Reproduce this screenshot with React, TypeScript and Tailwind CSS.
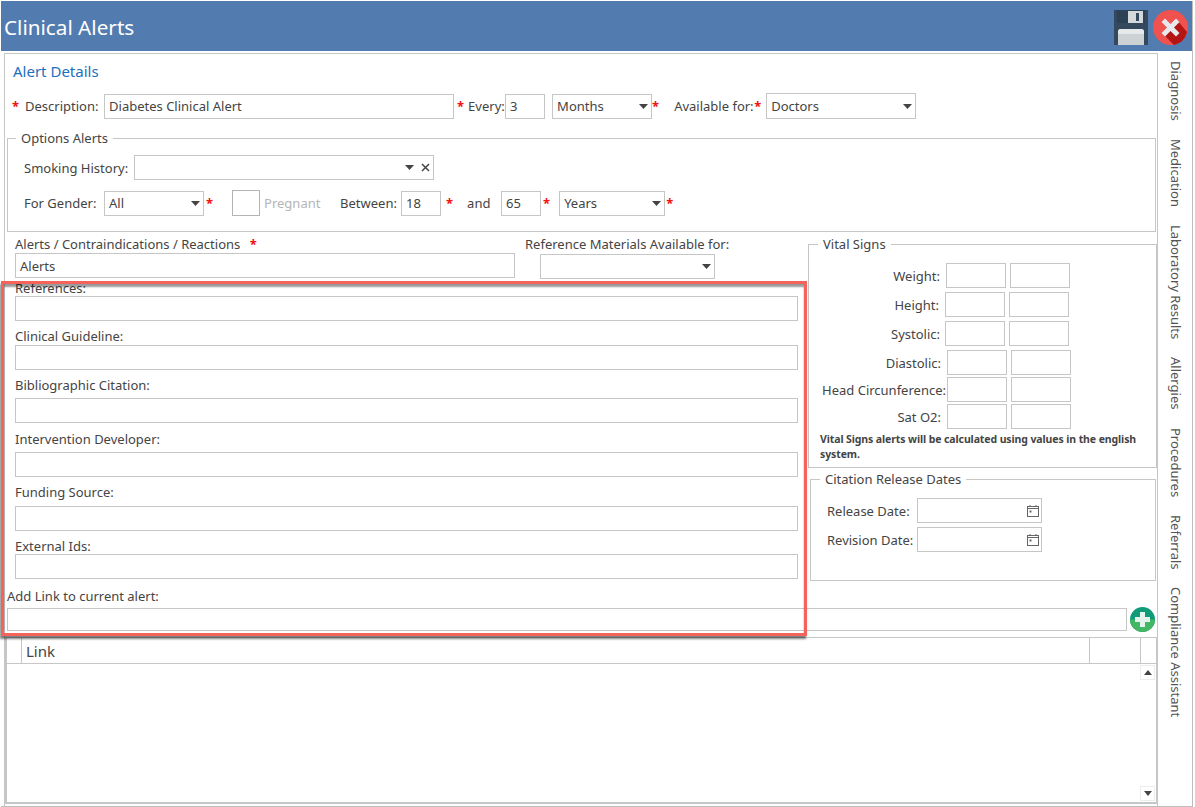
import type { ReactNode } from "react";

const tabs = ["Diagnosis", "Medication", "Laboratory Results", "Allergies", "Procedures", "Referrals", "Compliance Assistant"];

const vitals = [
  { label: "Weight:", labelW: "w-[119px]", gap: "ml-[6px]", top: "mt-0" },
  { label: "Height:", labelW: "w-[118px]", gap: "ml-[6px]", top: "mt-[4px]" },
  { label: "Systolic:", labelW: "w-[119px]", gap: "ml-[5px]", top: "mt-[4px]" },
  { label: "Diastolic:", labelW: "w-[120px]", gap: "ml-[6px]", top: "mt-[4px]" },
  { label: "Head Circunference:", labelW: "w-[125px]", gap: "ml-[1px]", top: "mt-[2px]" },
  { label: "Sat O2:", labelW: "w-[120px]", gap: "ml-[6px]", top: "mt-[2px]" },
];

const fields = [
  { label: "References:", top: "mt-0", input: "mt-[-1px]" },
  { label: "Clinical Guideline:", top: "mt-[6px]", input: "mt-0" },
  { label: "Bibliographic Citation:", top: "mt-[6px]", input: "mt-[4px]" },
  { label: "Intervention Developer:", top: "mt-[7px]", input: "mt-[4px]" },
  { label: "Funding Source:", top: "mt-[6px]", input: "mt-[5px]" },
  { label: "External Ids:", top: "mt-[6px]", input: "mt-[-1px]" },
];

function Star({ className = "" }: { className?: string }) {
  return <span className={`text-[#f01010] font-bold leading-none ${className}`}>*</span>;
}

function Box({ className = "", children }: { className?: string; children?: ReactNode }) {
  return (
    <div className={`flex items-center border border-[#c6c6c6] bg-white px-[4px] shrink-0 ${className}`}>
      {children}
    </div>
  );
}

function Arrow() {
  return (
    <svg width="9" height="5" viewBox="0 0 9 5" className="shrink-0">
      <polygon points="0,0 9,0 4.5,5" fill="#444444" />
    </svg>
  );
}

function Select({ className = "", value = "" }: { className?: string; value?: string }) {
  return (
    <Box className={`justify-between !pr-[3px] ${className}`}>
      <span>{value}</span>
      <Arrow />
    </Box>
  );
}

function CalendarIcon() {
  return (
    <svg width="14" height="14" viewBox="0 0 14 14" fill="none" stroke="#666666" strokeWidth="1" className="shrink-0">
      <rect x="1.5" y="2.5" width="11" height="10" />
      <path d="M1.5 4.5h11M4 1v2M10 1v2" />
      <rect x="3.5" y="6.5" width="2" height="2" fill="#666666" stroke="none" />
    </svg>
  );
}

function SaveIcon() {
  return (
    <svg width="34" height="35" viewBox="0 0 34 35" className="shrink-0">
      <rect width="34" height="35" fill="#34495e" />
      <rect x="3" y="0" width="28" height="13" fill="#2d4156" />
      <rect x="14" y="1" width="15" height="12" fill="#d4d8da" />
      <rect x="22" y="3" width="3" height="8" fill="#34495e" />
      <path d="M4 35V22a3 3 0 0 1 3-3h20a3 3 0 0 1 3 3v13z" fill="#ccd1d4" />
      <path d="M4 24v-2a3 3 0 0 1 3-3h20a3 3 0 0 1 3 3v2z" fill="#e6e9ea" />
    </svg>
  );
}

function CloseIcon() {
  return (
    <svg width="35" height="35" viewBox="0 0 35 35" className="shrink-0">
      <circle cx="17.5" cy="17.5" r="17.5" fill="#f0524f" />
      <path d="M24 10l10 12a17.5 17.5 0 0 1-13 13L10 24z" fill="#b51414" />
      <path d="M12 8.500l5.500 5.500 5.500-5.500 3.500 3.500-5.500 5.500 5.500 5.500-3.500 3.500-5.500-5.500-5.500 5.500-3.500-3.500 5.500-5.500-5.500-5.500z" fill="#e6e9ee" />
    </svg>
  );
}

function AddIcon() {
  return (
    <svg width="25" height="25" viewBox="0 0 25 25" className="shrink-0">
      <circle cx="12.500" cy="12.500" r="12.500" fill="#0f9a78" />
      <path d="M0 12.500h25a12.500 12.500 0 0 1-25 0z" fill="#43b763" />
      <path d="M10 5h5v5h5v5h-5v5h-5v-5H5v-5h5z" fill="#e4f4ec" />
    </svg>
  );
}

export default function App() {
  return (
    <div className="relative w-[1195px] h-[807px] overflow-hidden bg-white text-[13px] leading-[18px] text-[#444444] font-['Noto_Sans','Open_Sans',sans-serif]">
      <div className="flex flex-col h-[806px] ml-[1px] mr-[2px] mt-[1px] border-r border-b border-[#bdbdbd]">
        {/* Title bar */}
        <header className="flex items-center h-[50px] bg-[#527bb0] pl-[3px] pr-[4px] shrink-0">
          <h1 className="text-[20.7px] leading-[28px] mt-[2px] text-white flex-1">Clinical Alerts</h1>
          <div className="flex items-center gap-[5px] mt-[2px]">
            <SaveIcon />
            <CloseIcon />
          </div>
        </header>

        <div className="flex flex-1 min-h-0 pt-[2px]">
          {/* Form panel */}
          <main className="w-[1154px] ml-[3px] border border-[#c6c6c6] border-b-0 flex flex-col">
            <h2 className="text-[15px] leading-[20px] text-[#1c6fbe] ml-[8px] mt-[7px]">Alert Details</h2>

            {/* Description row */}
            <div className="flex items-center h-[26px] mt-[12px] ml-[7px] whitespace-nowrap">
              <Star />
              <span className="ml-[6px] w-[79px]">Description:</span>
              <Box className="w-[350px] h-[25px]">Diabetes Clinical Alert</Box>
              <Star className="ml-[3px]" />
              <span className="ml-[4px] w-[37px]">Every:</span>
              <Box className="w-[40px] h-[25px]">3</Box>
              <Select className="w-[100px] h-[25px] ml-[7px]" value="Months" />
              <Star />
              <span className="ml-[15px] w-[80px]">Available for:</span>
              <Star />
              <Select className="w-[150px] h-[26px] ml-[5px]" value="Doctors" />
            </div>

            {/* Options Alerts */}
            <fieldset className="border border-[#c6c6c6] ml-[2px] mr-[1px] mt-[10px] h-[103px] pl-[16px]">
              <legend className="ml-[-8px] px-[5px] leading-[18px]">Options Alerts</legend>
              <div className="flex items-center h-[25px] mt-[8px]">
                <span className="w-[110px]">Smoking History:</span>
                <Box className="w-[300px] h-[25px] justify-end gap-[7px] !pr-[3px]">
                  <Arrow />
                  <svg width="9" height="9" viewBox="0 0 9 9" stroke="#444444" strokeWidth="1.500" className="shrink-0">
                    <path d="M1 1l7 7M8 1l-7 7" />
                  </svg>
                </Box>
              </div>
              <div className="flex items-center h-[26px] mt-[10px] whitespace-nowrap">
                <span className="w-[80px]">For Gender:</span>
                <Select className="w-[100px] h-[25px]" value="All" />
                <Star className="ml-[2px]" />
                <div className="w-[28px] h-[26px] ml-[19px] border border-[#b4b4b4] bg-white shrink-0" />
                <span className="ml-[4px] w-[76px] text-[#b5b5b5]">Pregnant</span>
                <span className="w-[61px]">Between:</span>
                <Box className="w-[40px] h-[25px]">18</Box>
                <Star className="ml-[5px]" />
                <span className="ml-[14px] w-[34px]">and</span>
                <Box className="w-[40px] h-[25px]">65</Box>
                <Star className="ml-[2px]" />
                <Select className="w-[106px] h-[25px] ml-[9px]" value="Years" />
                <Star className="ml-[1px]" />
              </div>
            </fieldset>

            {/* Lower area */}
            <div className="flex">
              <div className="w-[803px] shrink-0 pl-[10px]">
                <div className="flex">
                  <div className="w-[510px] pt-[3px]">
                    <div className="h-[18px]">
                      Alerts / Contraindications / Reactions <Star className="ml-[6px]" />
                    </div>
                    <Box className="w-[500px] h-[25px]">Alerts</Box>
                  </div>
                  <div className="pt-[3px]">
                    <div className="h-[18px]">Reference Materials Available for:</div>
                    <Select className="w-[175px] h-[25px] mt-[1px] ml-[15px]" />
                  </div>
                </div>
                {fields.map((f) => (
                  <div key={f.label}>
                    <div className={`h-[18px] ${f.top}`}>{f.label}</div>
                    <Box className={`w-[783px] h-[25px] ${f.input}`} />
                  </div>
                ))}
              </div>

              <div className="w-[350px] shrink-0">
                <fieldset className="border border-[#c6c6c6] border-r-2 h-[233px] mt-[3px] pl-[12px]">
                  <legend className="ml-[-3px] px-[5px] leading-[18px]">Vital Signs</legend>
                  <div className="pt-[10px]">
                    {vitals.map((v) => (
                      <div key={v.label} className={`flex items-center h-[25px] ${v.top}`}>
                        <span className={`text-right shrink-0 whitespace-nowrap ${v.labelW}`}>{v.label}</span>
                        <Box className={`w-[60px] h-[25px] ${v.gap}`} />
                        <Box className="w-[60px] h-[25px] ml-[4px]" />
                      </div>
                    ))}
                  </div>
                  <p className="text-[10.5px] leading-[15px] font-bold mt-[3px] ml-[-1px] tracking-[-0.1px] whitespace-nowrap">
                    Vital Signs alerts will be calculated using values in the english
                    <br />
                    system.
                  </p>
                </fieldset>
                <fieldset className="border border-[#c6c6c6] ml-[2px] mr-[2px] mt-[2px] h-[111px] pl-[16px]">
                  <legend className="ml-[-7px] px-[5px] leading-[18px]">Citation Release Dates</legend>
                  <div className="flex items-center h-[25px] mt-[10px]">
                    <span className="w-[90px]">Release Date:</span>
                    <Box className="w-[125px] h-[25px] justify-end !pr-[1px]">
                      <CalendarIcon />
                    </Box>
                  </div>
                  <div className="flex items-center h-[25px] mt-[4px]">
                    <span className="w-[90px]">Revision Date:</span>
                    <Box className="w-[125px] h-[25px] justify-end !pr-[1px]">
                      <CalendarIcon />
                    </Box>
                  </div>
                </fieldset>
              </div>
            </div>

            {/* Add link */}
            <div className="ml-[2px] mt-[6px] h-[18px]">Add Link to current alert:</div>
            <div className="flex items-center ml-[2px] mt-[2px]">
              <Box className="w-[1120px] h-[23px]" />
              <div className="ml-[3px]">
                <AddIcon />
              </div>
            </div>

            {/* Link table */}
            <div className="flex flex-col flex-1 mt-[5px] border-2 border-t border-[#c6c6c6] mb-[2px] mr-[-1px]">
              <div className="flex h-[26px] border-b border-[#c6c6c6] text-[15px] leading-[26px] shrink-0">
                <div className="w-[15px] border-r border-[#c6c6c6]" />
                <div className="w-[1068px] border-r border-[#c6c6c6] pl-[4px]">Link</div>
                <div className="w-[51px] border-r border-[#c6c6c6]" />
              </div>
              <div className="flex flex-1 justify-end pr-[1px] py-[1px]">
                <div className="flex flex-col justify-between w-[15px]">
                  <div className="flex items-center justify-center h-[15px] border border-[#ececec]">
                    <svg width="8" height="5" viewBox="0 0 8 5"><polygon points="0,5 8,5 4,0" fill="#444444" /></svg>
                  </div>
                  <div className="flex items-center justify-center h-[15px] border border-[#ececec]">
                    <svg width="8" height="5" viewBox="0 0 8 5"><polygon points="0,0 8,0 4,5" fill="#444444" /></svg>
                  </div>
                </div>
              </div>
            </div>
          </main>

          {/* Side tabs */}
          <nav className="flex-1 flex flex-col items-center gap-[18px] pt-[8px] pl-[1px] text-[13px] text-[#555555]">
            {tabs.map((t) => (
              <span key={t} className="[writing-mode:vertical-rl] whitespace-nowrap leading-[18px]">
                {t}
              </span>
            ))}
          </nav>
        </div>
      </div>

      {/* Annotation over the screenshot */}
      <div className="absolute left-[1px] top-[281px] w-[806px] h-[355px] border-[3px] border-[#f4645c] shadow-[-1px_3px_2px_rgba(0,0,0,0.5),inset_0_3px_2px_rgba(0,0,0,0.4)]" />
    </div>
  );
}
